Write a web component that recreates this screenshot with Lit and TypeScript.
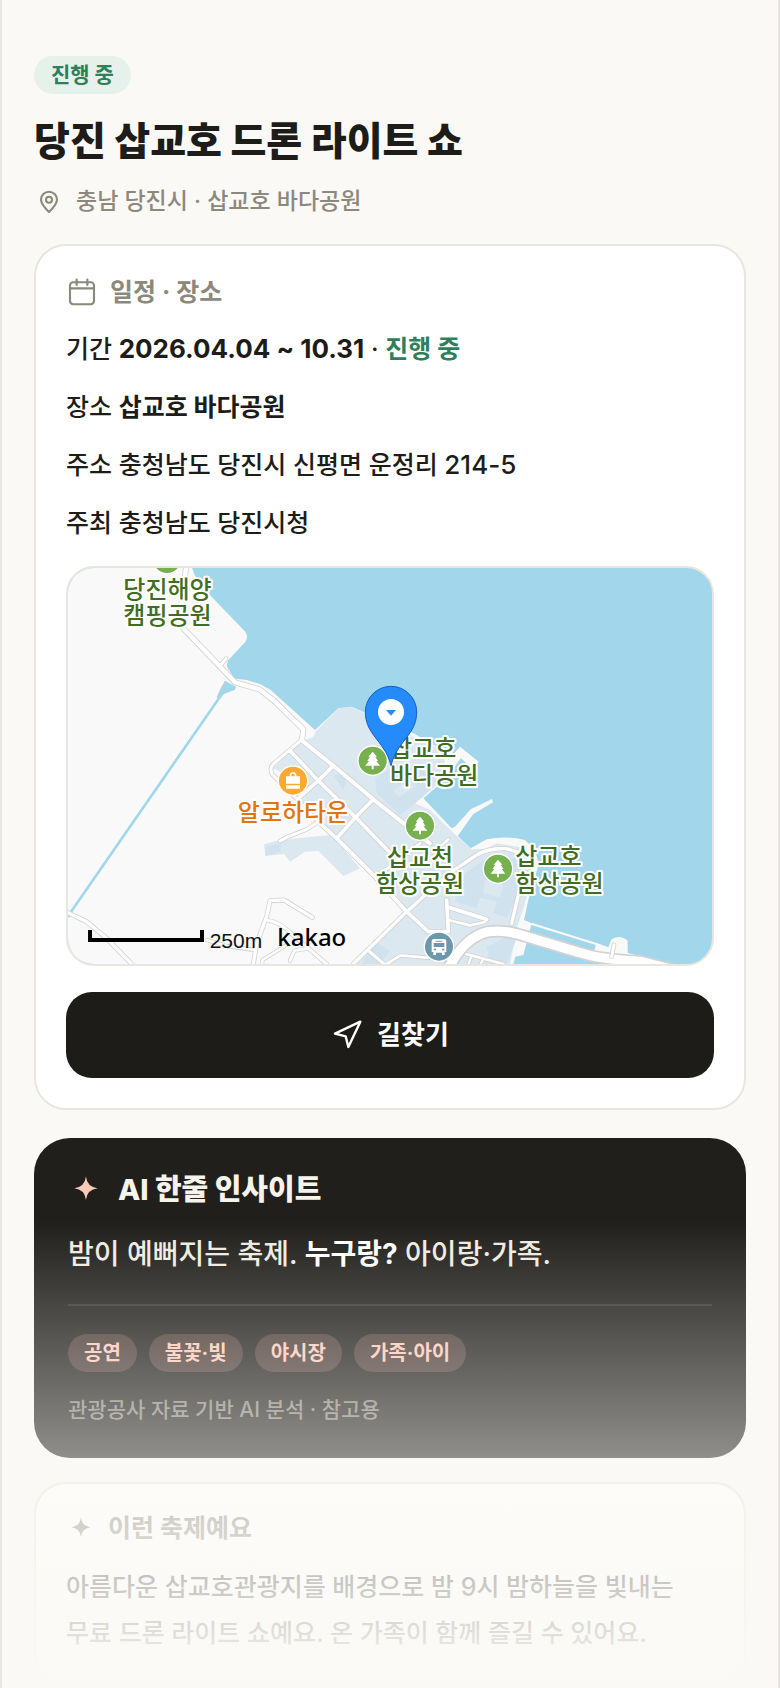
import { LitElement, html, svg, css } from "lit";
import { customElement } from "lit/decorators.js";

type Road = [path: string, width: number];

const ROADS: Road[] = [
  ["M378 24L364 130L362 190L370 205L525 367L598 388L640 420L730 508L726 542", 13],
  ["M480 318L498 296", 9],
  ["M726 542L820 617L940 718L1050 805L1110 850", 12],
  ["M722 542L640 612Q628 624 636 642L700 706L775 785", 9],
  ["M690 572L775 662L887 772L990 878L1040 920", 11],
  ["M775 785L830 835L945 950L1040 1055L1105 1115L1165 1115L1160 1020", 11],
  ["M820 617L775 662L715 715", 11],
  ["M940 718L887 772L830 835", 11],
  ["M1080 850L990 920L945 950", 9],
  ["M880 1212L1040 1055L1168 940L1248 886Q1290 862 1340 866L1385 880", 10],
  ["M1140 860L1165 838", 8],
  ["M1160 1040L1280 1078", 12],
  ["M1165 1080L1230 1096L1275 1086", 8],
  ["M1376 1000L1355 1090", 10],
  ["M980 1212L1022 1186L1112 1194", 8],
  ["M925 1172L972 1212", 9],
  ["M1196 1176L1330 1212", 8],
  ["M1235 1186L1226 1212", 7],
  ["M1270 1196L1262 1212", 7],
  ["M660 843L680 832L740 808L775 785", 9],
  ["M24 1058L80 1085L140 1135L215 1212", 10],
  ["M580 1212L590 1150L620 1070L630 1022L672 1020L757 1072", 10],
  ["M620 1080Q660 1086 690 1118L745 1165L800 1212", 9],
  ["M440 1140L500 1158L585 1170", 8],
  ["M607 1212V1200L680 1155", 7],
  ["M690 1202L703 1172L745 1165", 8],
];

const TREE =
  "M0-27L13-12H8L16 1H11L22 15H3V26H-3V15H-22L-11 1H-16L-8-12H-13Z";

const PARKS = [
  { x: 321, y: -3 },
  { x: 938, y: 602 },
  { x: 1080, y: 797 },
  { x: 1314, y: 926 },
];

const SPARKLE = "M12 2Q13 11 22 12Q13 13 12 22Q11 13 2 12Q11 11 12 2Z";

@customElement("festival-map")
export class FestivalMap extends LitElement {
  static styles = css`
    :host {
      display: block;
      box-sizing: border-box;
      height: 400px;
      border: 2px solid #e9e6df;
      border-radius: 28px;
      overflow: hidden;
      background: #a2d6eb;
    }
    .canvas {
      display: block;
      width: 100%;
      height: 100%;
    }
    .land { fill: #f9f9f9; }
    .town { fill: #dce8f0; }
    .block { fill: #d0e2ee; }
    .stream { fill: none; stroke: #a2d6eb; stroke-width: 8; }
    .water { fill: #a2d6eb; }
    .casing, .road { fill: none; stroke-linecap: round; stroke-linejoin: round; }
    .casing { stroke: #d2d2d2; }
    .road { stroke: #fff; }
    .disc { stroke: #fff; stroke-width: 4; }
    .park { fill: #76b04f; }
    .shop { fill: #fda831; }
    .bus { fill: #6d98ac; }
    .glyph { fill: #fff; }
    .label {
      font-family: "Noto Sans CJK KR", sans-serif;
      font-size: 72px;
      font-weight: 500;
      fill: #3f6e22;
      stroke: #fff;
      stroke-width: 12;
      stroke-linejoin: round;
      paint-order: stroke;
    }
    .mid { text-anchor: middle; }
    .warm { fill: #e2730f; }
    .bar { fill: none; stroke: #000; stroke-width: 12; }
    .distance { font-family: "Liberation Sans", Arial, sans-serif; font-size: 63px; fill: #111; }
    .brand { font-family: "Noto Sans", sans-serif; font-size: 72px; font-weight: 500; fill: #000; }
    .pin { fill: #258bfb; stroke: #1560c4; stroke-width: 3; }
    .arrow { fill: #258bfb; }
  `;

  render() {
    return html`
      <svg class="canvas" viewBox="24 24 1932 1188" preserveAspectRatio="xMidYMid slice" role="img" aria-label="삽교호 바다공원 지도">
        <path class="land" d="M24 24H396L405 48L440 95L556 215Q566 230 556 246L505 300Q498 312 503 324L524 356L560 360L600 372L632 390L765 510L835 445L875 440L1060 520L1150 570L1165 600L1200 560L1256 605L1240 625L1202 595L1160 655L1090 715L1175 805L1185 800L1232 748L1296 717L1299 727L1240 762L1193 828L1232 865L1280 838Q1340 826 1395 840L1425 870L1436 912L1405 1020L1392 1080L1415 1090L1390 1185L1366 1190L1360 1212H24Z"/>
        <path class="land" d="M1415 1088L1612 1150L1645 1162L1655 1138Q1680 1122 1703 1142V1178L1780 1200L1600 1180L1608 1155L1412 1094Z"/>
        <path class="town" d="M768 514L835 445L875 440L1060 530L1150 572L1160 650L1065 730L1110 750L1200 838L1235 868L1278 866L1310 850L1380 862L1412 890L1420 940L1392 1040L1372 1100L1350 1212H885L1040 1055L775 785L712 712L668 640L640 625L722 545L758 532Z"/>
        <path class="town" d="M612 853L660 840L815 824L900 925L850 948L775 872L735 875L690 905L672 882L616 888Z"/>
        <path class="block" d="M820 645L870 640L850 690ZM945 655L1010 615L1130 640L1120 680L1060 735L1020 765L950 700ZM1215 940L1290 888L1380 895L1405 925L1385 1000L1340 1072L1185 1025ZM1280 1160L1380 1110L1340 1212H1290ZM616 860L665 850L660 875L616 888ZM940 1140L990 1172L960 1212H905Z"/>
        <path class="town" d="M1276 960L1330 975L1320 1012L1268 1000ZM1260 1014L1310 1024L1300 1060L1250 1045ZM1000 690L1050 660L1065 680L1015 712Z"/>
        <path class="stream" d="M490 396L30 1060"/>
        <path class="water" d="M495 362L528 380L525 389L487 404L476 418L470 412L482 385ZM24 1070L34 1052L38 1060L26 1074Z"/>
        ${ROADS.map(([d, w]) => svg`<path class="casing" d=${d} stroke-width=${w + 5}></path>`)}
        ${ROADS.map(([d, w]) => svg`<path class="road" d=${d} stroke-width=${w}></path>`)}
        <path class="casing" stroke-width="38" d="M1165 1225Q1215 1130 1285 1115Q1335 1108 1400 1130L1560 1178Q1620 1198 1740 1204L1850 1232"/>
        <path class="road" stroke-width="28" d="M1165 1225Q1215 1130 1285 1115Q1335 1108 1400 1130L1560 1178Q1620 1198 1740 1204L1850 1232"/>
        <path class="casing" stroke-width="14" d="M1655 1190L1662 1154"/>
        <path class="road" stroke-width="9" d="M1655 1190L1662 1154"/>

        ${PARKS.map(
          (p) => svg`<g transform="translate(${p.x} ${p.y})">
            <circle class="disc park" r="44"></circle><path class="glyph" d=${TREE}></path>
          </g>`
        )}
        <g transform="translate(699 662)">
          <circle class="disc shop" r="44"/>
          <path class="glyph" fill-rule="evenodd" d="M-21-13H-10V-19L-5-25H5L10-19V-13H21V9H-21ZM-5-13H5V-17L3-20H-3L-5-17ZM-21 14H21V24H-21Z"/>
        </g>
        <g transform="translate(1137 1160)">
          <circle class="disc bus" r="44"/>
          <path class="glyph" fill-rule="evenodd" d="M-15-23H15Q22-23 22-16V16H17V25H9V18H-9V25H-17V16H-22V-16Q-22-23-15-23ZM-16-11V1H16V-11ZM-16 6V11H-9V6ZM9 6V11H16V6ZM-10-18V-15H10V-18Z"/>
        </g>

        <text class="label" x="190" y="114">당진해양</text>
        <text class="label" x="190" y="192">캠핑공원</text>
        <text class="label" x="990" y="591">삽교호</text>
        <text class="label" x="990" y="672">바다공원</text>
        <text class="label mid" x="1080" y="917">삽교천</text>
        <text class="label mid" x="1080" y="996">함상공원</text>
        <text class="label" x="1366" y="914">삽교호</text>
        <text class="label" x="1366" y="996">함상공원</text>
        <text class="label warm mid" x="699" y="783">알로하타운</text>

        <path class="pin" d="M993 617C984 578 962 554 942 527C924 503 916 482 916 456A77 77 0 0 1 1070 456C1070 482 1062 503 1044 527C1024 554 1002 578 993 617Z"/>
        <circle class="glyph" cx="993" cy="456" r="39"/>
        <path class="arrow" d="M978 450H1008L993 467Z"/>

        <path class="bar" d="M90 1110V1140H426V1110"/>
        <text class="distance" x="449" y="1163">250m</text>
        <text class="brand" x="652" y="1157">kakao</text>
      </svg>
    `;
  }
}

@customElement("app-root")
export class AppRoot extends LitElement {
  static styles = css`
    :host {
      display: block;
      box-sizing: border-box;
      min-height: 100vh;
      position: relative;
      overflow: hidden;
      padding: 56px 32px 0;
      border: solid #e9e7e0;
      border-width: 0 2px;
      background: #faf9f5;
      color: #1d1c18;
      font-family: Inter, "Noto Sans CJK KR", sans-serif;
      font-size: 25px;
      font-weight: 500;
      word-break: keep-all;
    }
    h1, h2, p, ul { margin: 0; padding: 0; }
    svg { fill: none; flex: none; }
    .status {
      display: inline-block;
      padding: 0 17px;
      border-radius: 20px;
      background: #e7f1ec;
      color: #2f7f5b;
      font-size: 21px;
      font-weight: 700;
      line-height: 38px;
      vertical-align: top;
    }
    .title {
      margin-top: 20px;
      font-size: 39px;
      font-weight: 800;
      line-height: 54px;
    }
    .place {
      display: flex;
      align-items: center;
      gap: 12px;
      margin: 16px 0 26px;
      color: #8c887c;
      font-size: 23px;
      line-height: 34px;
    }
    .card {
      padding: 30px;
      border: 2px solid #e9e6df;
      border-radius: 32px;
      background: #fff;
    }
    .heading {
      display: flex;
      align-items: center;
      gap: 12px;
      margin-bottom: 20px;
      color: #8c887c;
      font-size: 25px;
      font-weight: 700;
      line-height: 32px;
    }
    .rows {
      display: grid;
      gap: 16px;
      margin-bottom: 22px;
      line-height: 42px;
    }
    strong { font-weight: 700; }
    .num { font-size: 26px; }
    .live { color: #2f7f5b; }
    .route {
      display: flex;
      align-items: center;
      justify-content: center;
      gap: 14px;
      width: 100%;
      height: 86px;
      margin-top: 26px;
      padding: 0;
      border: 0;
      border-radius: 26px;
      background: #1d1c18;
      color: #fff;
      font-family: inherit;
      font-size: 26px;
      font-weight: 700;
      line-height: 32px;
    }
    .insight {
      margin-top: 28px;
      padding: 34px 34px 32px;
      border-radius: 36px;
      background: #201f1b;
      color: #f0ebe0;
      font-size: 28px;
    }
    .insight-title {
      display: flex;
      align-items: center;
      gap: 14px;
      color: #f6f3ec;
      font-size: 29px;
      font-weight: 800;
      line-height: 34px;
    }
    .insight-text { margin-top: 22px; line-height: 48px; }
    .insight-text strong { color: #fff; }
    .tags {
      display: flex;
      flex-wrap: wrap;
      gap: 12px;
      margin-top: 26px;
      padding-top: 28px;
      border-top: 2px solid #363531;
      list-style: none;
    }
    .tag {
      padding: 0 16px;
      border-radius: 20px;
      background: #4a3a35;
      color: #ffc9b8;
      font-size: 20px;
      font-weight: 700;
      line-height: 38px;
    }
    .note {
      margin-top: 22px;
      color: #88857b;
      font-size: 21px;
      line-height: 32px;
    }
    .about { margin-top: 24px; padding: 28px 30px; }
    .about-text { line-height: 46px; }
    .fade {
      position: absolute;
      inset: auto 0 0;
      height: 468px;
      background: linear-gradient(#faf9f500, #faf9f5);
      pointer-events: none;
    }
  `;

  render() {
    return html`
      <header>
        <span class="status">진행 중</span>
        <h1 class="title">당진 삽교호 드론 라이트 쇼</h1>
        <p class="place">
          <svg width="30" height="30" viewBox="0 0 24 24" stroke="currentColor" stroke-width="1.7" stroke-linejoin="round" aria-hidden="true">
            <path d="M12 20.8C8.5 17.4 5.6 14.4 5.6 11a6.4 6.4 0 0 1 12.8 0C18.4 14.4 15.5 17.4 12 20.8Z" />
            <circle cx="12" cy="11" r="2.4" />
          </svg>
          충남 당진시 · 삽교호 바다공원
        </p>
      </header>

      <section class="card">
        <h2 class="heading">
          <svg width="32" height="32" viewBox="0 0 24 24" stroke="currentColor" stroke-width="1.6" stroke-linecap="round" aria-hidden="true">
            <rect x="3" y="4.7" width="18" height="16.5" rx="2.4" />
            <path d="M3 9.3h18M8 2.7v4M16 2.7v4" />
          </svg>
          일정 · 장소
        </h2>
        <div class="rows">
          <p>기간 <strong class="num">2026.04.04 ~ 10.31</strong> · <strong class="live">진행 중</strong></p>
          <p>장소 <strong>삽교호 바다공원</strong></p>
          <p>주소 충청남도 당진시 신평면 운정리 <span class="num">214-5</span></p>
          <p>주최 충청남도 당진시청</p>
        </div>
        <festival-map></festival-map>
        <button class="route" type="button">
          <svg width="32" height="32" viewBox="0 0 24 24" stroke="currentColor" stroke-width="1.8" stroke-linejoin="round" aria-hidden="true">
            <path d="M3 11L22 2L13 21L11 13Z" />
          </svg>
          길찾기
        </button>
      </section>

      <section class="insight">
        <h2 class="insight-title">
          <svg width="36" height="36" viewBox="0 0 24 24" aria-hidden="true">
            <path fill="#ffc9b8" transform="translate(2.6 1.4) scale(.78)" d=${SPARKLE} />
          </svg>
          AI 한줄 인사이트
        </h2>
        <p class="insight-text">밤이 예뻐지는 축제. <strong>누구랑?</strong> 아이랑·가족.</p>
        <ul class="tags">
          ${["공연", "불꽃·빛", "야시장", "가족·아이"].map((t) => html`<li class="tag">${t}</li>`)}
        </ul>
        <p class="note">관광공사 자료 기반 AI 분석 · 참고용</p>
      </section>

      <section class="card about">
        <h2 class="heading">
          <svg width="30" height="30" viewBox="0 0 24 24" aria-hidden="true">
            <path fill="currentColor" transform="translate(2.6 2) scale(.78)" d=${SPARKLE} />
          </svg>
          이런 축제예요
        </h2>
        <p class="about-text">
          아름다운 삽교호관광지를 배경으로 밤 9시 밤하늘을 빛내는 무료 드론 라이트 쇼예요. 온 가족이 함께 즐길 수 있어요.
        </p>
      </section>
      <div class="fade"></div>
    `;
  }
}
